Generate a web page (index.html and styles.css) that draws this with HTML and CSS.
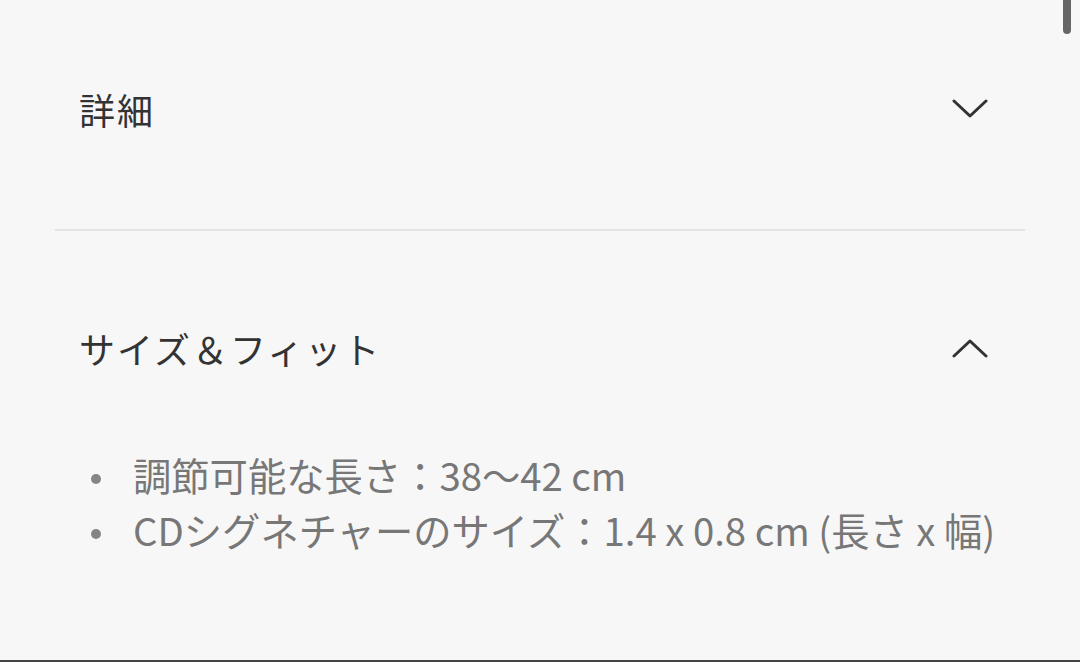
FILE: index.html
```html
<!DOCTYPE html>
<html lang="ja">
<head>
<meta charset="utf-8">
<link rel="stylesheet" href="styles.css">
</head>
<body>
<div class="page">
  <section class="acc">
    <div class="acc-head">
      <span class="acc-title">詳細</span>
      <svg class="chev" width="36" height="20" viewBox="0 0 36 20"><path d="M2 2 L18 17 L34 2" fill="none" stroke="#333" stroke-width="3" stroke-linecap="round" stroke-linejoin="round"/></svg>
    </div>
  </section>
  <section class="acc open">
    <div class="acc-head">
      <span class="acc-title">サイズ＆フィット</span>
      <svg class="chev" width="36" height="20" viewBox="0 0 36 20"><path d="M2 18 L18 3 L34 18" fill="none" stroke="#333" stroke-width="3" stroke-linecap="round" stroke-linejoin="round"/></svg>
    </div>
    <ul class="acc-list">
      <li>調節可能な長さ：38〜42 cm</li>
      <li>CDシグネチャーのサイズ：1.4 x 0.8 cm (長さ x 幅)</li>
    </ul>
  </section>
</div>
<div class="scrollbar"></div>
<div class="bottom-bar"></div>
</body>
</html>
```
FILE: styles.css
```css
html, body {
  margin: 0;
  padding: 0;
  background: #f7f7f7;
  height: 662px;
  overflow: hidden;
  font-family: "Noto Sans CJK JP", "Noto Sans", sans-serif;
}
.page {
  padding: 0 55px;
}
.acc {
  border-bottom: 2px solid #e4e4e4;
}
.acc.open {
  border-bottom: none;
}
.acc-head {
  display: flex;
  align-items: center;
  justify-content: space-between;
  height: 120px;
  padding: 49px 37px 60px 24px;
}
.acc.open .acc-head {
  padding-top: 57px;
  padding-bottom: 39px;
}
.acc-title {
  font-size: 36px;
  color: #333;
  letter-spacing: 2px;
}
.chev {
  display: block;
}
.acc-list {
  margin: 0;
  padding: 0 0 0 78px;
  list-style: none;
  color: #777;
  font-size: 38.3px;
  line-height: 55px;
}
.acc-list li {
  position: relative;
}
.acc-list li::before {
  content: "";
  position: absolute;
  left: -42px;
  top: 27px;
  width: 10px;
  height: 10px;
  border-radius: 50%;
  background: #858585;
}
.scrollbar {
  position: absolute;
  top: 0;
  left: 1063px;
  width: 8px;
  height: 34px;
  background: #666;
  border-radius: 0 0 4px 4px;
}
.bottom-bar {
  position: absolute;
  left: 0;
  right: 0;
  bottom: 0;
  height: 2px;
  background: #444;
}
```
